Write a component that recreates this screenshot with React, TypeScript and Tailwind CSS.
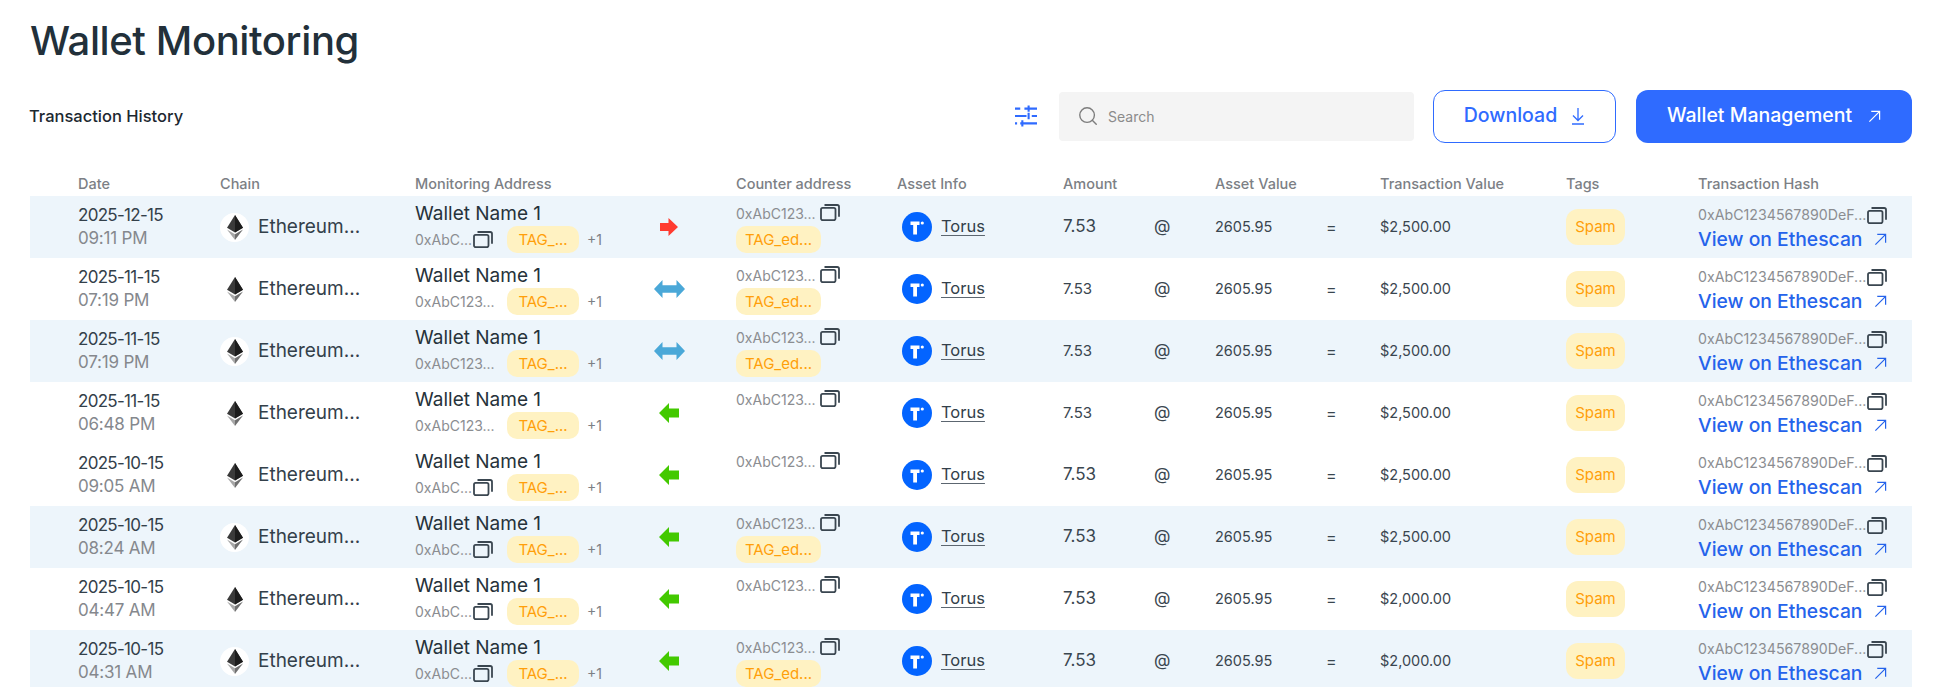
import { Search } from "lucide-react";

const font = "font-['Inter','Liberation_Sans',sans-serif]";

function Copy({ className = "" }: { className?: string }) {
  return (
    <svg viewBox="0 0 20 17" className={"w-[20px] h-[17px] shrink-0 " + className} fill="none" stroke="#3a4650" strokeWidth="1.800">
      <rect x="1" y="3.800" width="14.500" height="12.400" rx="1.600" />
      <path d="M4.500 1h12.700c1 0 1.800.8 1.800 1.800v10" />
    </svg>
  );
}

function UpRight({ className = "" }: { className?: string }) {
  return (
    <svg viewBox="0 0 14 14" className={"w-[13px] h-[13px] shrink-0 " + className} fill="none" stroke="currentColor" strokeWidth="1.300">
      <path d="M1.500 12.500 12.500 1.500M3.500 1.500h9v9" />
    </svg>
  );
}

function Eth() {
  return (
    <svg viewBox="0 0 18 28" className="w-[16px] h-[25px]">
      <polygon points="9,0 0,14.2 9,19.6 18,14.2" fill="#3a3a3a" />
      <polygon points="9,0 9,19.6 18,14.2" fill="#1c1c1c" />
      <polygon points="0,16.2 9,28 9,21.6" fill="#a8a8a8" />
      <polygon points="18,16.2 9,28 9,21.6" fill="#6f6f6f" />
    </svg>
  );
}

function Torus() {
  return (
    <svg viewBox="0 0 30 30" className="w-[30px] h-[30px] shrink-0">
      <circle cx="15" cy="15" r="15" fill="#0364ff" />
      <path d="M8.500 9.500h9v3.600h-2.500v9.400h-3.800v-9.400H8.500z" fill="#fff" />
      <circle cx="20.300" cy="11" r="1.600" fill="#fff" />
    </svg>
  );
}

function Dir({ d }: { d: "out" | "both" | "in" }) {
  if (d === "out")
    return (
      <svg viewBox="0 0 18 18" className="w-[18px] h-[18px]">
        <path d="M0 5h8.500V0L18 9l-9.500 9v-5H0z" fill="#ff3b30" />
      </svg>
    );
  if (d === "both")
    return (
      <svg viewBox="0 0 31 18" className="w-[31px] h-[18px]">
        <path d="M0 9 8.500 0v5.200h14V0L31 9l-8.500 9v-5.200h-14V18z" fill="#4aa8d8" />
      </svg>
    );
  return (
    <svg viewBox="0 0 20 20" className="w-[20px] h-[20px]">
      <path d="M0 10 10 0v5.500h10v9H10V20z" fill="#43c900" />
    </svg>
  );
}

function Tag({ children, className = "" }: { children: React.ReactNode; className?: string }) {
  return (
    <span className={"flex items-center justify-center bg-[#fff2c2] text-[#ff9f0a] text-[15px] leading-none rounded-[10px] h-[27px] pb-[1px] " + className}>
      {children}
    </span>
  );
}

type Row = {
  date: string;
  time: string;
  short: boolean;
  dir: "out" | "both" | "in";
  counterTag: boolean;
  value: string;
  big: boolean;
  tint: boolean;
};

const rows: Row[] = [
  { date: "2025-12-15", time: "09:11 PM", short: true, dir: "out", counterTag: true, value: "$2,500.00", big: true, tint: true },
  { date: "2025-11-15", time: "07:19 PM", short: false, dir: "both", counterTag: true, value: "$2,500.00", big: false, tint: false },
  { date: "2025-11-15", time: "07:19 PM", short: false, dir: "both", counterTag: true, value: "$2,500.00", big: false, tint: true },
  { date: "2025-11-15", time: "06:48 PM", short: false, dir: "in", counterTag: false, value: "$2,500.00", big: false, tint: false },
  { date: "2025-10-15", time: "09:05 AM", short: true, dir: "in", counterTag: false, value: "$2,500.00", big: true, tint: false },
  { date: "2025-10-15", time: "08:24 AM", short: true, dir: "in", counterTag: true, value: "$2,500.00", big: true, tint: true },
  { date: "2025-10-15", time: "04:47 AM", short: true, dir: "in", counterTag: false, value: "$2,000.00", big: true, tint: false },
  { date: "2025-10-15", time: "04:31 AM", short: true, dir: "in", counterTag: true, value: "$2,000.00", big: true, tint: true },
];

const grid = "grid grid-cols-[142px_195px_225px_96px_161px_166px_92px_60px_111px_54px_186px_132px_211px] pl-[48px]";

export default function App() {
  return (
    <div className={font + " h-[687px] w-[1944px] overflow-hidden bg-white text-[#26323a] pl-[30px] pr-[32px] pt-[17px]"}>
      <h1 className="text-[40px] leading-[48px] font-medium tracking-[-0.4px] text-[#22303a]">Wallet Monitoring</h1>
      <div className="flex items-center mt-[24px] h-[54px]">
        <div className="text-[16.500px] font-medium text-[#1c2830] flex-1 -ml-[1px]">Transaction History</div>
        <svg viewBox="0 0 21 21" className="w-[22px] h-[22px] mr-[22px]" fill="none" stroke="#2f6bff" strokeWidth="2">
          <path d="M0 3.500h5M9 3.500h12M13 .500v6M0 10.500h11M16 10.500h5M13 7.500v6M0 17.500h2M5 17.500h16M7 14.500v6" />
        </svg>
        <div className="w-[355px] h-[49px] bg-[#f4f4f4] rounded-[4px] flex items-center pl-[18px] gap-[9px] mr-[20px]">
          <Search className="w-[22px] h-[22px] text-[#7d7d7d]" strokeWidth={1.5} />
          <span className="text-[14px] text-[#8b8b8b]">Search</span>
        </div>
        <button className="w-[183px] h-[53px] rounded-[12px] border border-[#2f6bff] flex items-center justify-center gap-[14px] text-[#2f6bff] text-[19.500px] font-medium mr-[19px] -translate-x-[1px]">
          Download
          <svg viewBox="0 0 14 17" className="w-[14px] h-[17px]" fill="none" stroke="currentColor" strokeWidth="1.300">
            <path d="M7 0v12M2 7.500 7 12.500l5-5M1 16h12" />
          </svg>
        </button>
        <button className="w-[276px] h-[53px] rounded-[12px] bg-[#2f6bff] flex items-center justify-center gap-[16px] text-white text-[19.500px] font-medium">
          Wallet Management
          <UpRight />
        </button>
      </div>
      <div className={grid + " mt-[28px] h-[25px] items-center text-[14.500px] font-medium text-[#7c7f85]"}>
        <div>Date</div>
        <div>Chain</div>
        <div>Monitoring Address</div>
        <div />
        <div>Counter address</div>
        <div>Asset Info</div>
        <div>Amount</div>
        <div />
        <div>Asset Value</div>
        <div />
        <div>Transaction Value</div>
        <div>Tags</div>
        <div>Transaction Hash</div>
      </div>
      {rows.map((r, i) => (
        <div key={i} className={grid + " h-[62px] items-center " + (r.tint ? "bg-[#edf5fb]" : "bg-white")}>
          <div className="-mt-[1px]">
            <div className="text-[17px] leading-[23px] tracking-[-0.7px] text-[#33404a]">{r.date}</div>
            <div className="text-[17px] leading-[23px] tracking-[-0.2px] text-[#85888d]">{r.time}</div>
          </div>
          <div className="flex items-center gap-[10px]">
            <span className={"w-[29px] h-[29px] rounded-full flex items-center justify-center " + (r.tint ? "bg-white" : "")}>
              <Eth />
            </span>
            <span className="text-[19px] text-[#33404a] -ml-[1px]">Ethereum...</span>
          </div>
          <div>
            <div className="text-[19px] leading-[25px] text-[#26323a]">Wallet Name 1</div>
            <div className="flex items-center h-[27px]">
              <span className="text-[14px] text-[#8b8d91] w-[92px] flex items-center pb-[1px]">
                {r.short ? (
                  <>
                    0xAbC...
                    <Copy className="ml-[1px]" />
                  </>
                ) : (
                  "0xAbC123..."
                )}
              </span>
              <Tag className="w-[72px] mr-[9px]">TAG_...</Tag>
              <span className="text-[14px] text-[#7d8085] -ml-[1px] pb-[1px]">+1</span>
            </div>
          </div>
          <div className="flex justify-center w-[60px] -translate-x-[1px]">
            <Dir d={r.dir} />
          </div>
          <div className="self-start pt-[5px]">
            <div className="flex items-center h-[25px] text-[14px] text-[#8b8d91]">
              0xAbC123...
              <Copy className="ml-[4px] -mt-[3px]" />
            </div>
            {r.counterTag && <Tag className="w-[85px]">TAG_ed...</Tag>}
          </div>
          <div className="flex items-center gap-[9px] pl-[5px]">
            <Torus />
            <span className="text-[16.500px] text-[#33404a] underline underline-offset-[3px] decoration-1 decoration-[#5c6670] -mt-[1px]">Torus</span>
          </div>
          <div className={(r.big ? "text-[17px]" : "text-[15px]") + " text-[#3a464f]"}>7.53</div>
          <div className="text-[17px] text-[#3a464f] -ml-[1px]">@</div>
          <div className="text-[14.500px] text-[#3a464f]">2605.95</div>
          <div className="text-[16px] text-[#3a464f]">=</div>
          <div className="text-[14.500px] text-[#3a464f]">{r.value}</div>
          <div>
            <Tag className="w-[59px] h-[36px] rounded-[12px]">Spam</Tag>
          </div>
          <div>
            <div className="flex items-center h-[25px] text-[14.200px] text-[#8b8d91]">
              0xAbC1234567890DeF...
              <Copy className="ml-[1px]" />
            </div>
            <div className="flex items-center text-[19.300px] leading-[25px] text-[#2563eb] font-medium -mt-[1px]">
              View on Ethescan
              <UpRight className="ml-[12px]" />
            </div>
          </div>
        </div>
      ))}
    </div>
  );
}
